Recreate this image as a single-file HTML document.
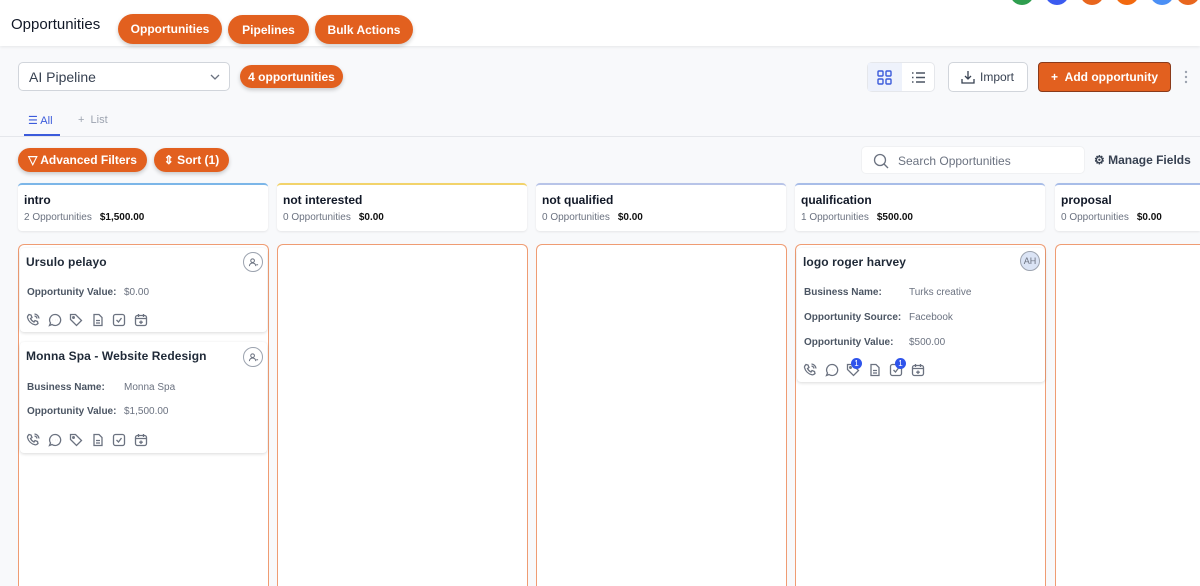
<!DOCTYPE html>
<html style="height:586px;overflow:hidden"><head><style>
*{box-sizing:border-box;margin:0;padding:0}
body{width:1200px;height:586px;overflow:hidden;background:#f8f9fb;font-family:"Liberation Sans",sans-serif;position:relative;color:#111827}
.a{position:absolute}
.obtn{position:absolute;background:#e2601f;color:#fff;font-weight:bold;font-size:12px;border-radius:16px;display:flex;align-items:center;justify-content:center;box-shadow:0 2px 4px rgba(0,0,0,.2)}
.dot{position:absolute;top:-19px;width:24px;height:24px;border-radius:50%}
.hcard{position:absolute;top:183px;width:250px;height:48px;background:#fff;border-radius:4px;border-top:2px solid #93c5fd;box-shadow:0 1px 2px rgba(0,0,0,.08);padding:8px 6px}
.hcard b{font-size:12px;display:block}
.hcard span{font-size:10px;color:#6b7280}
.hcard span i{font-style:normal;color:#111;font-weight:bold;margin-left:8px}
.col{position:absolute;top:244px;width:251px;height:342px;border:1px solid #ef9c73;border-bottom:none;border-radius:6px 6px 0 0;background:#fff}
.card{position:absolute;background:#fff;border-radius:4px;box-shadow:0 1px 3px rgba(0,0,0,.15)}
.card .t{position:absolute;left:6px;top:7px;font-size:12px;font-weight:bold;color:#1f2937;letter-spacing:.1px}
.row{position:absolute;left:7px;font-size:10px;color:#6b7280}
.row b{color:#4b5563;font-weight:bold;display:inline-block}
.av{position:absolute;width:20px;height:20px;border-radius:50%;border:1px solid #9ca3af;font-size:9px;color:#6b7280;display:flex;align-items:center;justify-content:center}
.icons{position:absolute;left:6px;display:flex;gap:7.5px}
.icons svg{width:14px;height:14px;stroke:#6b7280;fill:none;stroke-width:1.3}
</style></head><body>
<div class="a" style="left:0;top:0;width:1200px;height:46px;background:#fff;box-shadow:0 1px 3px rgba(0,0,0,.08)"></div>
<div class="dot" style="left:1010px;background:#2f9e4f"></div>
<div class="dot" style="left:1045px;background:#3b5bf0"></div>
<div class="dot" style="left:1080px;background:#e8661e"></div>
<div class="dot" style="left:1115px;background:#f2690f"></div>
<div class="dot" style="left:1150px;background:#4b8ff5"></div>
<div class="dot" style="left:1176px;background:#e8661e"></div>
<div class="a" style="left:11px;top:16px;font-size:15px;font-weight:500">Opportunities</div>
<div class="obtn" style="left:118px;top:14px;width:104px;height:30px">Opportunities</div>
<div class="obtn" style="left:228px;top:15px;width:81px;height:29px">Pipelines</div>
<div class="obtn" style="left:315px;top:15px;width:98px;height:29px">Bulk Actions</div>

<div class="a" style="left:18px;top:62px;width:212px;height:29px;background:#fff;border:1px solid #d1d5db;border-radius:5px;font-size:14px;padding:6px 10px;color:#374151">AI Pipeline<svg class="a" style="right:8px;top:10px" width="12" height="8"><path d="M2 2l4 4 4-4" stroke="#6b7280" fill="none" stroke-width="1.3"/></svg></div>
<div class="obtn" style="left:240px;top:65px;width:103px;height:23px;font-size:12px">4 opportunities</div>

<div class="a" style="left:867px;top:62px;width:68px;height:30px;border:1px solid #e5e7eb;border-radius:5px;background:#fff"><div class="a" style="left:0;top:0;width:34px;height:28px;background:#eef2fb"></div>
<svg class="a" style="left:9px;top:7px" width="15" height="15" stroke="#3b5bdb" fill="none" stroke-width="1.4"><rect x="1" y="1" width="5" height="5" rx="1"/><rect x="9" y="1" width="5" height="5" rx="1"/><rect x="1" y="9" width="5" height="5" rx="1"/><rect x="9" y="9" width="5" height="5" rx="1"/></svg>
<svg class="a" style="left:43px;top:7px" width="15" height="15" stroke="#4b5563" stroke-width="1.4"><path d="M5 3h9M5 7.5h9M5 12h9M1 3h1.5M1 7.5h1.5M1 12h1.5"/></svg></div>
<div class="a" style="left:948px;top:62px;width:80px;height:30px;border:1px solid #d1d5db;border-radius:5px;background:#fff;font-size:12px;color:#374151;padding:7px 0 0 31px">Import<svg class="a" style="left:12px;top:7px" width="14" height="14" stroke="#374151" fill="none" stroke-width="1.3"><path d="M7 1v8M4 6l3 3 3-3M1 9v4h12V9"/></svg></div>
<div class="obtn" style="left:1038px;top:62px;width:133px;height:30px;border-radius:4px;border:1px solid #8a3a1a;box-shadow:none;font-size:12px">+&nbsp;&nbsp;Add opportunity</div>
<svg class="a" style="left:1183px;top:70px" width="6" height="14" fill="#9ca3af"><circle cx="3" cy="2" r="1.2"/><circle cx="3" cy="7" r="1.2"/><circle cx="3" cy="12" r="1.2"/></svg>

<div class="a" style="left:28px;top:114px;font-size:11px;color:#3b5bdb">☰ All</div>
<div class="a" style="left:24px;top:134px;width:36px;height:2px;background:#3b5bdb"></div>
<div class="a" style="left:78px;top:114px;font-size:11px;color:#9ca3af">+&nbsp; List</div>
<div class="a" style="left:0;top:136px;width:1200px;height:1px;background:#e5e7eb"></div>

<div class="obtn" style="left:18px;top:148px;width:129px;height:24px">▽ Advanced Filters</div>
<div class="obtn" style="left:154px;top:148px;width:75px;height:24px">⇕ Sort (1)</div>

<div class="a" style="left:861px;top:146px;width:224px;height:28px;background:#fff;border-radius:5px;border:1px solid #f0f1f3;font-size:12px;color:#6b7280;padding:7px 0 0 36px">Search Opportunities<svg class="a" style="left:11px;top:6px" width="16" height="16" stroke="#6b7280" fill="none" stroke-width="1.3"><circle cx="7" cy="7" r="5.5"/><path d="M11 11l4 4"/></svg></div>
<div class="a" style="left:1094px;top:153px;font-size:12px;color:#374151;font-weight:bold">⚙ Manage Fields</div>

<div class="hcard" style="left:18px;border-top-color:#7cb6e8"><b>intro</b><span>2 Opportunities<i>$1,500.00</i></span></div>
<div class="hcard" style="left:277px;border-top-color:#f2d36b"><b>not interested</b><span>0 Opportunities<i>$0.00</i></span></div>
<div class="hcard" style="left:536px;border-top-color:#b8c4e8"><b>not qualified</b><span>0 Opportunities<i>$0.00</i></span></div>
<div class="hcard" style="left:795px;border-top-color:#a8bde8"><b>qualification</b><span>1 Opportunities<i>$500.00</i></span></div>
<div class="hcard" style="left:1055px;width:145px;border-top-color:#a8bde8;border-radius:4px 0 0 4px"><b>proposal</b><span>0 Opportunities<i>$0.00</i></span></div>

<div class="col" style="left:18px"></div>
<div class="col" style="left:277px"></div>
<div class="col" style="left:536px"></div>
<div class="col" style="left:795px"></div>
<div class="col" style="left:1055px;width:145px;border-right:none;border-radius:6px 0 0 0"></div>

<svg width="0" height="0" style="position:absolute"><defs>
<symbol id="ph" viewBox="0 0 14 14"><path d="M3 1.5l2 .5 1 2.5-1.5 1a7 7 0 0 0 3.5 3.5l1-1.5 2.5 1 .5 2c-1 1-2 1.5-3 1.3A10 10 0 0 1 1.5 4.5C1.3 3.5 2 2.5 3 1.5zM8.5 3a3 3 0 0 1 2.5 2.5M8.5 1a5 5 0 0 1 4.5 4.5"/></symbol>
<symbol id="ch" viewBox="0 0 14 14"><path d="M7 1.5a5.5 5.5 0 1 1-3 10L1.5 12.5l1-2.5A5.5 5.5 0 0 1 7 1.5z"/><path d="M4.5 7h.1M7 7h.1M9.5 7h.1"/></symbol>
<symbol id="tg" viewBox="0 0 14 14"><path d="M1.5 1.5h5l6 6-5 5-6-6z"/><circle cx="4.5" cy="4.5" r=".8"/></symbol>
<symbol id="dc" viewBox="0 0 14 14"><path d="M3 1.5h5l3 3v8H3z M5 7.5h4M5 10h4"/></symbol>
<symbol id="ck" viewBox="0 0 14 14"><rect x="1.5" y="1.5" width="11" height="11" rx="2"/><path d="M4.5 7l2 2 3-4"/></symbol>
<symbol id="cl" viewBox="0 0 14 14"><rect x="1.5" y="2.5" width="11" height="10" rx="2"/><path d="M4.5 1v3M9.5 1v3M1.5 5.5h11M7 7.5v3.5M5.2 9.2h3.6"/></symbol>
<symbol id="us" viewBox="0 0 12 12"><circle cx="5" cy="4" r="2"/><path d="M1.5 10a3.5 3.5 0 0 1 7 0M9 8.5l2 0"/></symbol>
</defs></svg>

<div class="card" style="left:20px;top:248px;width:247px;height:84px">
<div class="t">Ursulo pelayo</div><div class="av" style="left:223px;top:4px"><svg width="11" height="11" stroke="#6b7280" fill="none" stroke-width="1.1"><use href="#us"/></svg></div>
<div class="row" style="top:39px"><b style="width:97px">Opportunity Value:</b>$0.00</div>
<div class="icons" style="top:65px"><svg><use href="#ph"/></svg><svg><use href="#ch"/></svg><svg><use href="#tg"/></svg><svg><use href="#dc"/></svg><svg><use href="#ck"/></svg><svg><use href="#cl"/></svg></div>
</div>
<div class="card" style="left:20px;top:342px;width:247px;height:111px">
<div class="t">Monna Spa - Website Redesign</div><div class="av" style="left:223px;top:5px"><svg width="11" height="11" stroke="#6b7280" fill="none" stroke-width="1.1"><use href="#us"/></svg></div>
<div class="row" style="top:40px"><b style="width:97px">Business Name:</b>Monna Spa</div>
<div class="row" style="top:64px"><b style="width:97px">Opportunity Value:</b>$1,500.00</div>
<div class="icons" style="top:91px"><svg><use href="#ph"/></svg><svg><use href="#ch"/></svg><svg><use href="#tg"/></svg><svg><use href="#dc"/></svg><svg><use href="#ck"/></svg><svg><use href="#cl"/></svg></div>
</div>
<div class="card" style="left:797px;top:248px;width:248px;height:134px">
<div class="t">logo roger harvey</div><div class="av" style="left:223px;top:3px;background:#dbe4f5">AH</div>
<div class="row" style="top:39px"><b style="width:105px">Business Name:</b>Turks creative</div>
<div class="row" style="top:64px"><b style="width:105px">Opportunity Source:</b>Facebook</div>
<div class="row" style="top:89px"><b style="width:105px">Opportunity Value:</b>$500.00</div>
<div class="icons" style="top:115px"><svg><use href="#ph"/></svg><svg><use href="#ch"/></svg><svg><use href="#tg"/></svg><svg><use href="#dc"/></svg><svg><use href="#ck"/></svg><svg><use href="#cl"/></svg></div>
<div class="a" style="left:54px;top:110px;width:11px;height:11px;border-radius:50%;background:#2f54eb;color:#fff;font-size:8px;text-align:center;line-height:11px">1</div>
<div class="a" style="left:98px;top:110px;width:11px;height:11px;border-radius:50%;background:#2f54eb;color:#fff;font-size:8px;text-align:center;line-height:11px">1</div>
</div>
</body></html>
